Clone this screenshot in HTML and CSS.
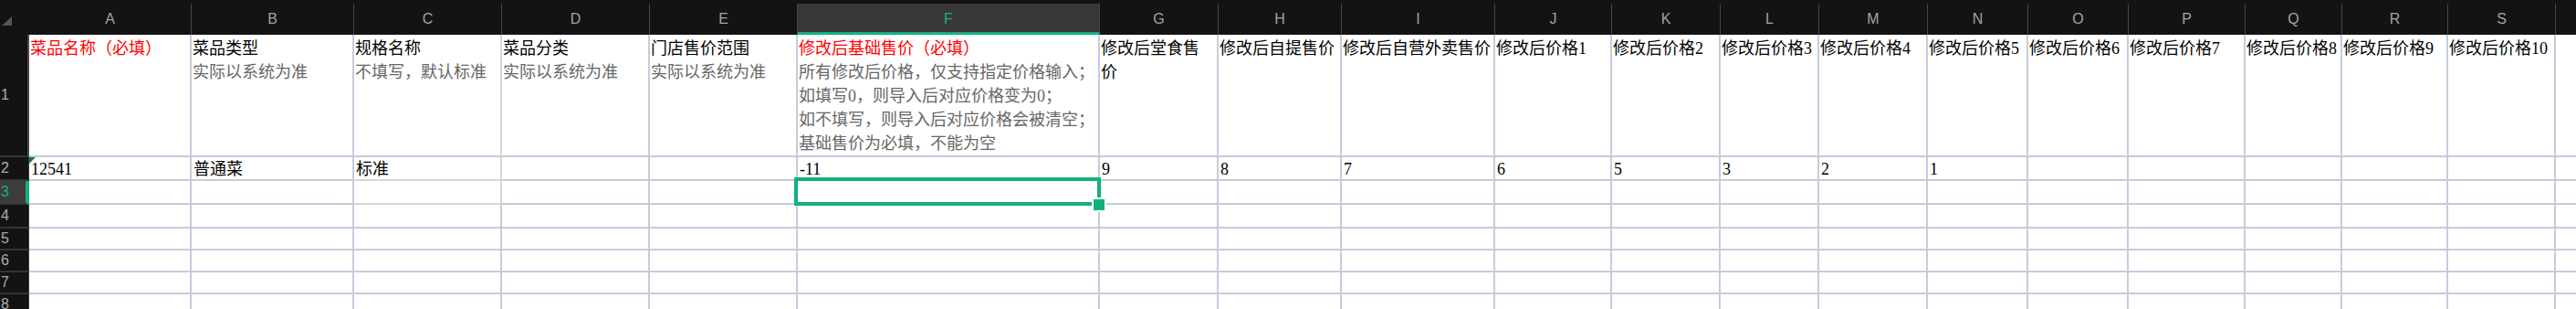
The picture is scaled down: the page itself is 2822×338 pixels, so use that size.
FILE: index.html
```html
<!DOCTYPE html>
<html lang="zh-CN">
<head>
    <meta charset="UTF-8">
    <meta name="viewport" content="width=device-width, initial-scale=1.0">
    <title>菜品价格导入模板</title>
    <link rel="stylesheet" href="styles.css">
</head>
<body>

<div class="sheet" id="sheet"></div>

<script>
    const letters = 'ABCDEFGHIJKLMNOPQRST'.split('');

    const titles = {
        A: '<p class="req">菜品名称（必填）</p>',
        B: '<p>菜品类型</p><p class="tip">实际以系统为准</p>',
        C: '<p>规格名称</p><p class="tip">不填写，默认标准</p>',
        D: '<p>菜品分类</p><p class="tip">实际以系统为准</p>',
        E: '<p>门店售价范围</p><p class="tip">实际以系统为准</p>',
        F: '<p class="req">修改后基础售价（必填）</p>' +
           '<p class="tip">所有修改后价格，仅支持指定价格输入；</p>' +
           '<p class="tip">如填写0，则导入后对应价格变为0；</p>' +
           '<p class="tip">如不填写，则导入后对应价格会被清空；</p>' +
           '<p class="tip">基础售价为必填，不能为空</p>',
        G: '<p>修改后堂食售</p><p>价</p>',
        H: '<p>修改后自提售价</p>',
        I: '<p>修改后自营外卖售价</p>'
    };
    for (let i = 1; i <= 10; i++) {
        titles[letters[8 + i]] = `<p>修改后价格${i}</p>`;
    }

    const values = { A: '12541', B: '普通菜', C: '标准', F: '-11', G: '9', H: '8', I: '7', J: '6', K: '5', L: '3', M: '2', N: '1' };

    function renderSheet() {
        let html = '<div class="corner"><svg width="11" height="10" viewBox="0 0 11 10"><polygon points="11,0 11,10 0,10" fill="#555"/></svg></div>';

        // column T only peeks in at the right edge, its letter is off screen
        letters.forEach(l => {
            html += `<div class="ch${l === 'F' ? ' active' : ''}">${l === 'T' ? '' : l}</div>`;
        });

        for (let r = 1; r <= 8; r++) {
            html += `<div class="rh${r === 3 ? ' active' : ''}${r === 1 ? ' tall' : ''}">${r}</div>`;
            letters.forEach(l => {
                let cls = 'c';
                let text = '';
                if (r === 1) {
                    cls += ' title';
                    text = titles[l] || '';
                }
                if (r === 2) text = values[l] || '';
                if (l === 'C' && r <= 3) cls += ' plain';
                if (l === 'C' && (r === 2 || r === 3)) cls += ' plain-b';
                if (l === 'A' && r === 2) cls += ' flag';
                if (l === 'F' && r === 3) {
                    cls += ' sel';
                    text = '<span class="sel-box"></span><span class="sel-handle"></span>';
                }
                html += `<div class="${cls}">${text}</div>`;
            });
        }

        document.getElementById('sheet').innerHTML = html;
    }

    renderSheet();
</script>

</body>
</html>
```

FILE: styles.css
```css
body {
    margin: 0;
    background-color: #131313;
    overflow: hidden;
}
.sheet {
    display: grid;
    grid-template-columns: 32px 178px 178px 162px 162px 162px 331px 130px 135px 168px 128px 119px 108px 119px 110px 110px 128px 106px 116px 118px 100px;
    grid-template-rows: 38px 134px 26px 26px 26px 24px 24px 24px 24px;
    width: 2822px;
    height: 338px;
    overflow: hidden;
    background-color: #131313;
}
.corner {
    padding: 18px 0 0 2px;
}
.corner svg {
    display: block;
}
.ch {
    margin-top: 4px;
    display: flex;
    align-items: center;
    justify-content: center;
    border-right: 1px solid #454545;
    color: #a3a3a3;
    font: 16px "Liberation Sans", Arial, sans-serif;
}
.ch.active {
    background-color: #383838;
    color: #12b07f;
    border-bottom: 3px solid #12b07f;
    padding-top: 3px;
}
.rh {
    display: flex;
    align-items: center;
    padding-left: 1px;
    border-bottom: 2px solid #343434;
    border-right: 1px solid #3c3c3c;
    color: #ababab;
    font: 16px "Liberation Sans", Arial, sans-serif;
}
.rh.tall {
    border-right: 2px solid #4a4a4a;
}
.rh.active {
    background-color: #3c3c3c;
    color: #12b07f;
    border-right: 4px solid #12b07f;
}
.c {
    background-color: #ffffff;
    border-right: 2px solid #c5ccdd;
    border-bottom: 2px solid #c5ccdd;
    padding: 0 2px 0 2px;
    white-space: nowrap;
    overflow: hidden;
    color: #000000;
    font: 18px/26px "Liberation Serif", "Noto Sans CJK SC", serif;
}
.c.title {
    padding-top: 2px;
    padding-left: 1px;
}
.c p {
    margin: 0;
}
.c .req {
    color: #ff0000;
}
.c .tip {
    color: #666666;
}
.c.plain {
    border-right-color: #d6d6d6;
}
.c.plain-b {
    border-bottom-color: #d6d6d6;
}
.c.flag {
    position: relative;
}
.c.flag::before {
    content: "";
    position: absolute;
    left: 0;
    top: 0;
    border-top: 7px solid #1d7a24;
    border-right: 7px solid transparent;
}
.c.sel {
    position: relative;
    overflow: visible;
}
.sel-box {
    position: absolute;
    left: -4px;
    top: -4px;
    width: 336px;
    height: 31px;
    box-sizing: border-box;
    border: 4px solid #12b07f;
    z-index: 2;
}
.sel-handle {
    position: absolute;
    left: 322px;
    top: 18px;
    width: 16px;
    height: 16px;
    box-sizing: border-box;
    background-color: #12b07f;
    border: 2px solid #ffffff;
    z-index: 3;
}
```
